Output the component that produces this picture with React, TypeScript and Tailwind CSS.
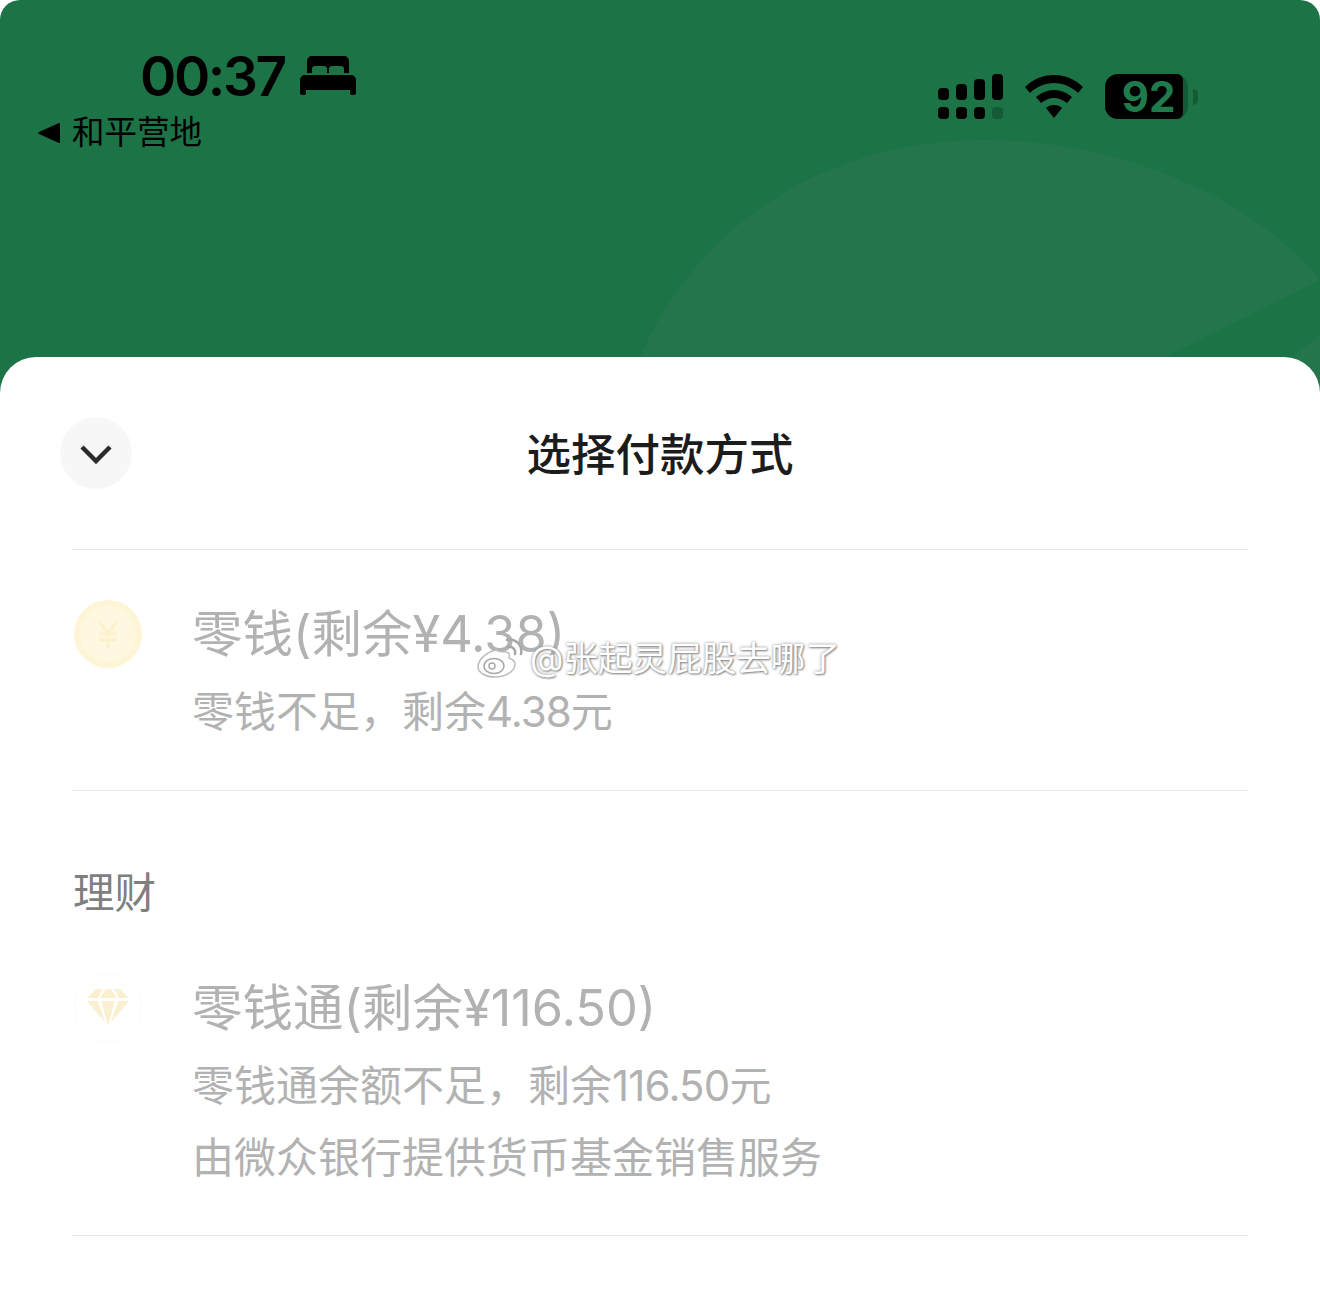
const font = "font-['Inter','Noto_Sans_CJK_SC',sans-serif]";

const Bed = () => (
  <svg width="56" height="40" viewBox="0 0 56 40" fill="#000">
    <path d="M7 17V5a5 5 0 0 1 5-5h32a5 5 0 0 1 5 5v12h-5v-4a3 3 0 0 0-3-3h-9a3 3 0 0 0-3 3v4h-2v-4a3 3 0 0 0-3-3h-9a3 3 0 0 0-3 3v4z" />
    <path d="M5 19h46a5 5 0 0 1 5 5v13a2 2 0 0 1-2 2h-2a2 2 0 0 1-2-2v-3H6v3a2 2 0 0 1-2 2H2a2 2 0 0 1-2-2V24a5 5 0 0 1 5-5z" />
  </svg>
);

const Signal = () => (
  <div className="flex items-end gap-[7px]">
    <div className="flex flex-col gap-[7px]">
      <div className="w-[11px] h-[12px] rounded-[4px] bg-black" />
      <div className="w-[11px] h-[12px] rounded-[4px] bg-black" />
    </div>
    <div className="flex flex-col gap-[7px]">
      <div className="w-[11px] h-[16px] rounded-[4px] bg-black" />
      <div className="w-[11px] h-[12px] rounded-[4px] bg-black" />
    </div>
    <div className="flex flex-col gap-[7px]">
      <div className="w-[11px] h-[21px] rounded-[4px] bg-black" />
      <div className="w-[11px] h-[12px] rounded-[4px] bg-black" />
    </div>
    <div className="flex flex-col gap-[7px]">
      <div className="w-[11px] h-[26px] rounded-[4px] bg-black" />
      <div className="w-[11px] h-[12px] rounded-[4px] bg-[#155a36]" />
    </div>
  </div>
);

const Wifi = () => (
  <svg width="58" height="44" viewBox="0 0 58 44" fill="#000">
    <path d="M29 0c11 0 21 4 29 12l-5 6c-6-6-15-10-24-10S11 12 5 18l-5-6C8 4 18 0 29 0z" />
    <path d="M29 15c7 0 13 3 18 7l-5 6c-4-3-8-5-13-5s-9 2-13 5l-5-6c5-4 11-7 18-7z" />
    <path d="M29 30c3 0 6 1 8 3L29 43l-8-10c2-2 5-3 8-3z" />
  </svg>
);

const Battery = () => (
  <div className="flex items-center gap-[5px]">
    <div className="w-[83px] h-[45px] rounded-[13px] bg-[#155a36]">
      <div className="w-[78px] h-[45px] rounded-l-[13px] rounded-r-[6px] bg-black flex items-center justify-center pl-[9px]">
        <span className="text-[42px] leading-[45px] font-bold text-[#1f7a4c]">92</span>
      </div>
    </div>
    <div className="w-[5px] h-[16px] rounded-r-full bg-[#155a36]" />
  </div>
);

const Coin = () => (
  <div className="w-[68px] h-[68px] rounded-full bg-[#fdf5d6] flex items-center justify-center shrink-0">
    <div className="w-[56px] h-[56px] rounded-full bg-[#fef8e0] flex items-center justify-center">
      <svg width="24" height="28" viewBox="0 0 24 28" fill="none" stroke="#fcf1cc" strokeWidth="3">
        <path d="M3 1l9 12 9-12M12 13v15M3 14h18M3 20h18" />
      </svg>
    </div>
  </div>
);

const Diamond = () => (
  <div className="w-[68px] h-[68px] rounded-full border border-[#fbfbfb] flex items-start justify-center pt-[14px] shrink-0">
    <svg width="42" height="37" viewBox="0 0 42 37" fill="#faf0d0">
      <path d="M9 0h7l-5 9H0z" />
      <path d="M19 0h5l6 9H13z" />
      <path d="M27 0h6l9 9H32z" />
      <path d="M0 12h11l7 21z" />
      <path d="M14 12h14l-7 25z" />
      <path d="M31 12h11L24 33z" />
    </svg>
  </div>
);

const Weibo = () => (
  <svg width="46" height="40" viewBox="0 0 46 40" fill="none">
    <path d="M19 12C9 14 1 22 1 29c0 6 8 10 17 10 11 0 20-6 20-13 0-4-4-5-6-6 1-3 0-6-3-6-3-1-6 1-10-2z" fill="#fff" stroke="#bdbdbd" strokeWidth="1.5" />
    <ellipse cx="17" cy="28" rx="10" ry="7.5" fill="#fff" stroke="#a8a8a8" strokeWidth="1.5" />
    <circle cx="15" cy="28" r="3" stroke="#a8a8a8" strokeWidth="1.5" />
    <path d="M31 9c4-1 8 2 7 7M30 2c8-2 16 5 14 14" stroke="#a8a8a8" strokeWidth="2.5" strokeLinecap="round" />
  </svg>
);

export default function App() {
  return (
    <div className={`${font} w-[1320px] h-[1312px] overflow-hidden bg-white relative`}>
      <div className="relative h-[393px] -mb-[36px] bg-[#1c7346] rounded-t-[20px] overflow-hidden">
        <svg className="absolute inset-0" width="1320" height="393" viewBox="0 0 1320 393" fill="#25754c">
          <path d="M640 357C700 220 830 140 985 140c140 0 270 60 335 140l-155 77z" />
          <path d="M1320 335l-45 35 45 20z" />
        </svg>

        <div className="relative flex items-start justify-between pl-[38px] pr-[122px] pt-[46px]">
          <div className="flex flex-col">
            <div className="flex items-center gap-[15px] pl-[102px]">
              <span className="text-[55px] leading-[60px] font-semibold tracking-[-2.400px] text-black">00:37</span>
              <Bed />
            </div>
            <div className="flex items-center gap-[12px] mt-[5px]">
              <svg width="22" height="20" viewBox="0 0 22 20" fill="#000">
                <path d="M22 1v18a1 1 0 0 1-1.500 .8L1 11a1.200 1.200 0 0 1 0-2L20.500 .2A1 1 0 0 1 22 1z" />
              </svg>
              <span className="text-[32.5px] leading-[44px] text-black">和平营地</span>
            </div>
          </div>
          <div className="flex items-center gap-[22px] pt-[28px]">
            <Signal />
            <Wifi />
            <Battery />
          </div>
        </div>
      </div>

      <div className="relative bg-white rounded-t-[36px] px-[72px]">
        <div className="relative h-[193px] flex items-center justify-center border-b border-[#e9e9e9]">
          <div className="absolute left-[-12px] top-[60px] w-[72px] h-[72px] rounded-full bg-[#f7f7f7] flex items-center justify-center">
            <svg width="32" height="20" viewBox="0 0 32 20" fill="none" stroke="#2a2a2a" strokeWidth="4.500" className="mt-[2px]">
              <path d="M2 3l14 14L30 3" />
            </svg>
          </div>
          <h1 className="text-[44.5px] leading-[60px] font-medium text-[#1c1c1c] mt-[3px]">选择付款方式</h1>
        </div>

        <div className="h-[241px] flex items-start gap-[50px] border-b border-[#e9e9e9] pl-[2px] pt-[50px]">
          <Coin />
          <div>
            <div className="text-[50.5px] leading-[68px] text-[#b2b2b2]">零钱(剩余¥4.38)</div>
            <div className="text-[42px] leading-[60px] mt-[14px] text-[#b2b2b2]">
              零钱不足，剩余<span className="tracking-[-1px]">4.38</span>元
            </div>
          </div>
        </div>

        <div className="text-[41.5px] leading-[56px] text-[#7f7f7f] pl-[1px] mt-[74px]">理财</div>

        <div className="h-[315px] flex items-start gap-[50px] border-b border-[#e9e9e9] pl-[2px] pt-[53px]">
          <Diamond />
          <div>
            <div className="text-[50.5px] leading-[68px] text-[#b2b2b2]">零钱通(剩余¥116.50)</div>
            <div className="text-[42px] leading-[60px] mt-[14px] text-[#b2b2b2]">
              零钱通余额不足，剩余<span className="tracking-[-0.8px]">116.50</span>元
            </div>
            <div className="text-[42px] leading-[60px] mt-[12px] text-[#b2b2b2]">由微众银行提供货币基金销售服务</div>
          </div>
        </div>
      </div>

      <div className="absolute left-[477px] top-[638px] flex items-center gap-[7px]">
        <Weibo />
        <span className="text-[34.6px] leading-[40px] text-white [text-shadow:0_0_3px_#8a8a8a,1px_1px_2px_#8a8a8a]">@张起灵屁股去哪了</span>
      </div>
    </div>
  );
}
